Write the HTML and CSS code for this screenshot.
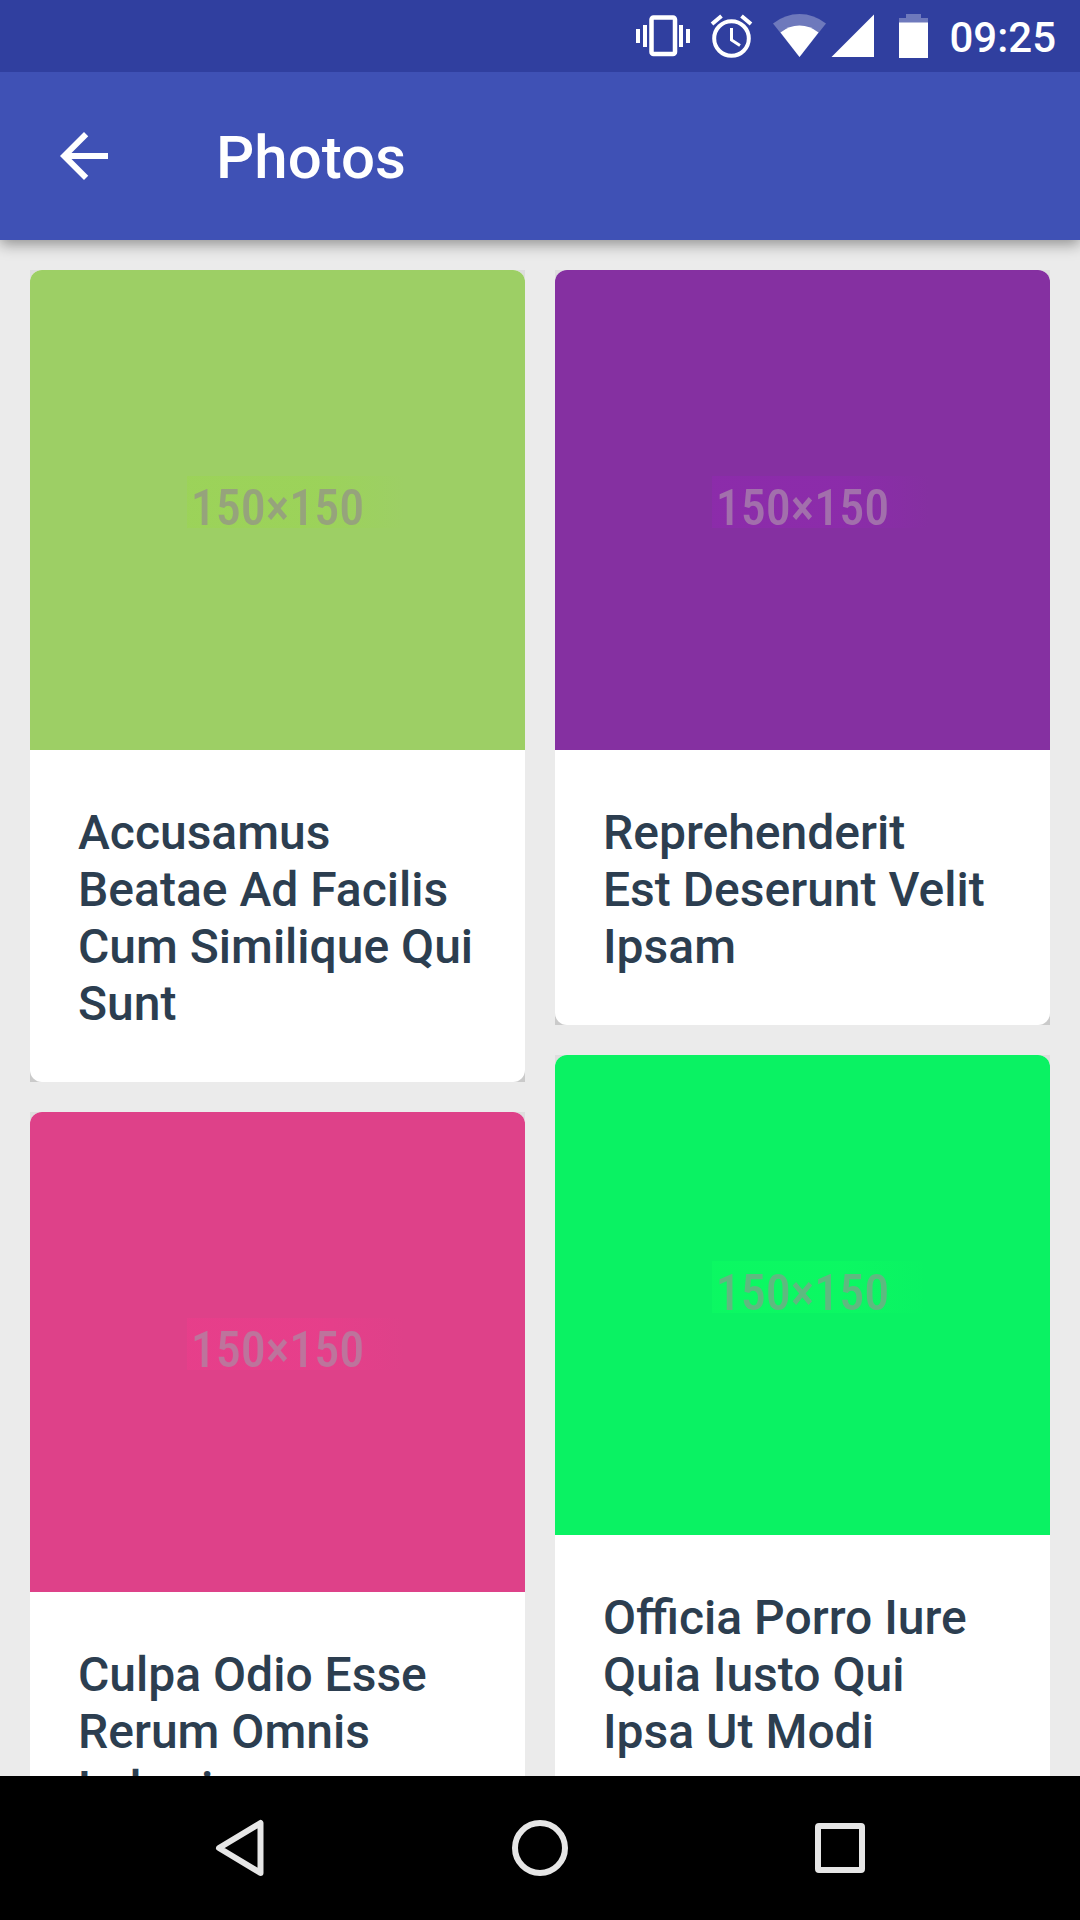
FILE: index.html
```html
<!DOCTYPE html>
<html lang="en">
<head>
<meta charset="utf-8">
<meta name="viewport" content="width=device-width, initial-scale=1">
<title>Photos</title>
<link rel="stylesheet" href="styles.css">
</head>
<body>
<div class="status-bar">
  <svg class="status-icons" width="294" height="72" viewBox="636 0 294 72" aria-hidden="true">
    <g fill="#fff">
      <path d="M636 29h4v14h-4zM643 25h4v22h-4zM679 25h4v22h-4zM686 29h4v14h-4z"/>
      <rect x="651.500" y="17.500" width="23.500" height="36.500" rx="2" fill="none" stroke="#fff" stroke-width="4.500"/>
      <circle cx="731.500" cy="38.500" r="17.300" fill="none" stroke="#fff" stroke-width="4"/>
      <path d="M731.500 28v12l8.500 5.500" fill="none" stroke="#fff" stroke-width="3"/>
      <path d="M712 24l9.500-8M751 24l-9.500-8" fill="none" stroke="#fff" stroke-width="4"/>
      <path d="M773 23.500Q785 14 799.500 14T826 23.500L799.500 57z" opacity=".3"/>
      <path d="M780.500 32.500Q789 25.500 799.500 25.500T818.500 32.500L799.500 57z"/>
      <path d="M874 14.500V57h-42.500z"/>
      <path d="M906 14h15v4h7v5h-29v-5h7z" opacity=".3"/>
      <path d="M899 22.500h29V58h-29z"/>
    </g>
  </svg>
  <time class="clock">09:25</time>
</div>

<header class="app-bar">
  <button class="back" type="button" aria-label="Back">
    <svg width="72" height="72" viewBox="0 0 24 24" aria-hidden="true"><path fill="#fff" d="M20 11H7.830l5.590-5.590L12 4l-8 8 8 8 1.410-1.410L7.830 13H20z"/></svg>
  </button>
  <h1 class="title">Photos</h1>
</header>

<main class="photos">
  <div class="column">
    <div class="card-shade">
      <article class="card">
        <div class="thumb thumb-lime"><span class="size">150×150</span></div>
        <h2 class="caption">Accusamus<br>Beatae Ad Facilis<br>Cum Similique Qui<br>Sunt</h2>
      </article>
    </div>
    <div class="card-shade">
      <article class="card">
        <div class="thumb thumb-pink"><span class="size">150×150</span></div>
        <h2 class="caption">Culpa Odio Esse<br>Rerum Omnis<br>Laboriosam</h2>
      </article>
    </div>
  </div>
  <div class="column">
    <div class="card-shade">
      <article class="card">
        <div class="thumb thumb-purple"><span class="size">150×150</span></div>
        <h2 class="caption">Reprehenderit<br>Est Deserunt Velit<br>Ipsam</h2>
      </article>
    </div>
    <div class="card-shade">
      <article class="card">
        <div class="thumb thumb-green"><span class="size">150×150</span></div>
        <h2 class="caption">Officia Porro Iure<br>Quia Iusto Qui<br>Ipsa Ut Modi</h2>
      </article>
    </div>
  </div>
</main>

<nav class="nav-bar" aria-label="System">
  <button type="button" aria-label="Back">
    <svg width="60" height="60" viewBox="0 0 60 60" aria-hidden="true"><path d="M50.500 5v50L9 30z"/></svg>
  </button>
  <button type="button" aria-label="Home">
    <svg width="60" height="60" viewBox="0 0 60 60" aria-hidden="true"><circle cx="30" cy="30" r="25"/></svg>
  </button>
  <button type="button" aria-label="Recent apps">
    <svg width="60" height="60" viewBox="0 0 60 60" aria-hidden="true"><rect x="8" y="8" width="44" height="44" rx="1"/></svg>
  </button>
</nav>
</body>
</html>
```
FILE: styles.css
```css
* {
  box-sizing: border-box;
}

body {
  margin: 0;
  height: 100vh;
  display: flex;
  flex-direction: column;
  overflow: hidden;
  background: #ebebeb;
  color: #2c3e50;
  font-family: Roboto, sans-serif;
  font-weight: 500;
}

button {
  display: flex;
  align-items: center;
  justify-content: center;
  padding: 0;
  border: 0;
  background: none;
}

svg {
  display: block;
}

.status-bar {
  flex: none;
  display: flex;
  align-items: center;
  justify-content: flex-end;
  gap: 19px;
  height: 72px;
  padding-right: 24px;
  background: #303f9f;
  color: #fff;
  z-index: 2;
}

.clock {
  padding-top: 4px;
  font-size: 42px;
  line-height: 68px;
}

.app-bar {
  flex: none;
  display: flex;
  align-items: center;
  gap: 96px;
  height: 168px;
  padding: 0 48px;
  background: #3f51b5;
  color: #fff;
  box-shadow: 0 4px 14px rgba(0, 0, 0, 0.4);
  z-index: 1;
}

.title {
  margin: 0;
  padding-top: 4px;
  font-size: 60px;
  font-weight: 500;
  line-height: 72px;
}

.photos {
  flex: 1;
  min-height: 0;
  display: grid;
  grid-template-columns: 1fr 1fr;
  align-items: start;
  gap: 30px;
  padding: 30px;
  overflow: hidden;
}

.column {
  display: flex;
  flex-direction: column;
  gap: 30px;
}

/* Shows in the card's rounded corners as a clipped shadow. */
.card-shade {
  background: linear-gradient(#dedede, #cacaca);
}

.card {
  overflow: hidden;
  border-radius: 12px;
  background: #fff;
}

.thumb {
  display: flex;
  align-items: center;
  justify-content: center;
  height: 480px;
  padding-bottom: 4px;
}

.size {
  position: relative;
  z-index: 0;
  font-family: "Roboto Condensed", "Liberation Sans Narrow", sans-serif;
  font-size: 50px;
  font-weight: 500;
  line-height: 56px;
}

/* Slightly more saturated patch behind the size label. */
.size::before {
  content: "";
  position: absolute;
  inset: -4px -40px 8px -4px;
  z-index: -1;
  background: linear-gradient(90deg, var(--patch) 60%, transparent);
  opacity: 0.6;
}

.thumb-lime {
  --patch: #9bd552;
  background: #9dcf65;
  color: #96a37c;
}

.thumb-purple {
  --patch: #9029b0;
  background: #8530a1;
  color: #a26fac;
}

.thumb-pink {
  --patch: #ec3d8b;
  background: #de4189;
  color: #bd749c;
}

.thumb-green {
  --patch: #0cfc62;
  background: #0af263;
  color: #5fb980;
}

.caption {
  margin: 0;
  padding: 54px 48px 50px;
  font-size: 48px;
  font-weight: 500;
  line-height: 57px;
  white-space: nowrap;
}

.nav-bar {
  flex: none;
  display: grid;
  grid-template-columns: repeat(3, 1fr);
  height: 144px;
  padding: 0 90px;
  background: #000;
}

.nav-bar svg {
  fill: none;
  stroke: #e6e6e6;
  stroke-width: 6px;
  stroke-linejoin: round;
}
```
